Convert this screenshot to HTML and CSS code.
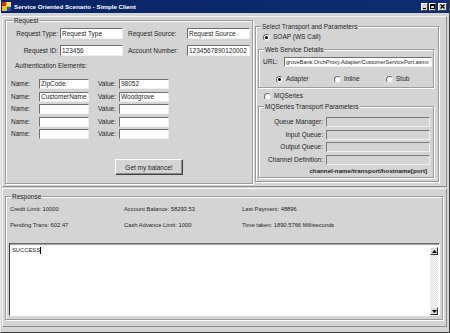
FILE: index.html
```html
<!DOCTYPE html>
<html lang="en">
<head>
  <meta charset="UTF-8">
  <title>Service Oriented Scenario - Simple Client</title>
  <link rel="stylesheet" href="styles.css">
</head>
<body>

  <div class="window">
    <div class="titlebar">
      <svg class="app-icon" width="9" height="9" viewBox="0 0 9 9">
        <rect x="0" y="0" width="9" height="9" fill="#f0c020"/>
        <rect x="0" y="0" width="4" height="4" fill="#d03020"/>
        <rect x="5" y="5" width="4" height="4" fill="#2050c0"/>
        <rect x="5" y="0" width="4" height="4" fill="#f8e070"/>
      </svg>
      <span class="title">Service Oriented Scenario - Simple Client</span>
      <div class="caption-buttons">
        <span class="cap-btn cap-min"></span>
        <span class="cap-btn cap-max"></span>
        <span class="cap-btn cap-close">
          <svg width="5" height="5" viewBox="0 0 5 5"><path d="M0.5 0.5 L4.5 4.5 M4.5 0.5 L0.5 4.5" stroke="#000" stroke-width="1.2"/></svg>
        </span>
      </div>
    </div>

    <div class="panel panel-top">
      <fieldset class="group request">
        <legend>Request</legend>
        <div class="req-grid">
          <span class="lbl right">Request Type:</span>
          <div class="field">Request Type</div>
          <span class="lbl lbl2">Request Source:</span>
          <div class="field">Request Source</div>
          <span class="lbl right">Request ID:</span>
          <div class="field">123456</div>
          <span class="lbl lbl2">Account Number:</span>
          <div class="field">1234567890120002</div>
        </div>

        <div class="auth-title">Authentication Elements:</div>
        <div class="auth-grid">
          <span class="lbl name">Name:</span><div class="field">ZipCode</div>
          <span class="lbl value">Value:</span><div class="field">98052</div>
          <span class="lbl name">Name:</span><div class="field">CustomerName</div>
          <span class="lbl value">Value:</span><div class="field">Woodgrove</div>
          <span class="lbl name">Name:</span><div class="field"></div>
          <span class="lbl value">Value:</span><div class="field"></div>
          <span class="lbl name">Name:</span><div class="field"></div>
          <span class="lbl value">Value:</span><div class="field"></div>
          <span class="lbl name">Name:</span><div class="field"></div>
          <span class="lbl value">Value:</span><div class="field"></div>
        </div>

        <button class="btn">Get my balance!</button>
      </fieldset>

      <fieldset class="group transport">
        <legend>Select Transport and Parameters</legend>
        <div class="radio-row soap-row"><span class="radio on"></span>SOAP (WS Call)</div>

        <fieldset class="group ws-group">
          <legend>Web Service Details</legend>
          <div class="url-row">
            <span class="lbl url-lbl">URL:</span>
            <div class="field url-field">groveBank.OrchProxy.Adapter/CustomerServicePort.asmx</div>
          </div>
          <div class="mode-row">
            <div class="radio-row mode-adapter"><span class="radio on"></span>Adapter</div>
            <div class="radio-row mode-inline"><span class="radio"></span>Inline</div>
            <div class="radio-row"><span class="radio"></span>Stub</div>
          </div>
        </fieldset>

        <div class="radio-row mq-row"><span class="radio"></span>MQSeries</div>

        <fieldset class="group mq-group">
          <legend>MQSeries Transport Parameters</legend>
          <div class="mq-grid">
            <span class="lbl right">Queue Manager:</span><div class="field off"></div>
            <span class="lbl right">Input Queue:</span><div class="field off"></div>
            <span class="lbl right">Output Queue:</span><div class="field off"></div>
            <span class="lbl right">Channel Definition:</span><div class="field off"></div>
          </div>
          <div class="mq-note">channel-name/transport/hostname[port]</div>
        </fieldset>
      </fieldset>
    </div>

    <div class="panel panel-bottom">
      <fieldset class="group response">
        <legend>Response</legend>
        <div class="info-grid">
          <span>Credit Limit: 10000</span>
          <span>Account Balance: 58293.53</span>
          <span>Last Payment: 48896</span>
          <span>Pending Trans: 602.47</span>
          <span>Cash Advance Limit: 1000</span>
          <span>Time taken: 1890.5766 Milliseconds</span>
        </div>
        <div class="textbox">
          <div class="text-body">SUCCESS<span class="caret"></span></div>
          <div class="scrollbar">
            <span class="sb-btn">
              <svg width="5" height="3" viewBox="0 0 5 3"><path d="M0 3 L2.5 0 L5 3 Z" fill="#000"/></svg>
            </span>
            <span class="sb-track"></span>
            <span class="sb-btn">
              <svg width="5" height="3" viewBox="0 0 5 3"><path d="M0 0 L2.5 3 L5 0 Z" fill="#000"/></svg>
            </span>
          </div>
        </div>
      </fieldset>
    </div>
  </div>

</body>
</html>
```

FILE: styles.css
```css
body {
  margin: 0;
  background: #d4d4d4;
  font-family: "Liberation Sans", Arial, sans-serif;
  font-size: 6.5px;
  color: #1e1e1e;
}

.window {
  width: 450px;
  height: 333px;
  box-sizing: border-box;
  border-left: 1px solid #e8e8e8;
  border-right: 1px solid #404040;
  border-bottom: 1px solid #404040;
  background: #d4d4d4;
  overflow: hidden;
}

/* title bar */
.titlebar {
  height: 13px;
  display: flex;
  align-items: center;
  padding: 0 2px 0 1px;
  background: linear-gradient(90deg, #0a2466, #0e2c72);
}

.app-icon {
  margin-right: 3px;
}

.title {
  flex: 1;
  color: #fff;
  font-weight: bold;
  font-size: 6.2px;
  line-height: 8px;
}

.caption-buttons {
  display: flex;
  gap: 1px;
}

.cap-btn {
  width: 7px;
  height: 8px;
  box-sizing: border-box;
  background: #d4d4d4;
  border: 1px solid;
  border-color: #fff #404040 #404040 #fff;
  position: relative;
  display: flex;
  align-items: center;
  justify-content: center;
}

.cap-min::after {
  content: "";
  position: absolute;
  left: 1px;
  bottom: 1px;
  width: 3px;
  height: 1px;
  background: #000;
}

.cap-max::after {
  content: "";
  width: 3px;
  height: 2px;
  border: 1px solid #000;
  border-top-width: 2px;
}

.cap-close {
  width: 9px;
  margin-left: 1px;
}

/* split panels */
.panel {
  box-sizing: border-box;
  border: 1px solid;
  border-color: #f4f4f4 #8c8c8c #8c8c8c #f4f4f4;
  margin-left: 1px;
  margin-right: 2px;
}

.panel-top {
  margin-top: 3px;
  height: 171px;
  display: flex;
  align-items: flex-start;
}

.panel-bottom {
  margin-top: 1px;
  height: 139px;
}

/* group boxes */
.group {
  margin: 0;
  padding: 0;
  min-width: 0;
  box-sizing: border-box;
  border: 1px solid #9a9a9a;
  box-shadow: inset 1px 1px 0 #fff, 1px 1px 0 #fff;
}

.group legend {
  font-size: 6.5px;
  line-height: 7px;
  padding: 0 1px;
  margin-left: 5px;
  background: #d4d4d4;
}

.lbl {
  line-height: 10px;
  white-space: nowrap;
}

.right {
  text-align: right;
}

.field {
  box-sizing: border-box;
  height: 10px;
  background: #fff;
  border: 1px solid;
  border-color: #6e6e6e #f0f0f0 #f0f0f0 #6e6e6e;
  padding: 0 1px;
  line-height: 8px;
  white-space: nowrap;
  overflow: hidden;
}

.field.off {
  background: #d4d4d4;
  border-color: #7a7a7a #f0f0f0 #f0f0f0 #7a7a7a;
}

/* request */
.request {
  width: 248px;
  height: 167px;
  margin-left: 2px;
  padding: 4px 0 0 2px;
}

.req-grid {
  display: grid;
  grid-template-columns: 50px 63px 60px 63px;
  grid-auto-rows: 11px;
  column-gap: 2px;
  row-gap: 6px;
}

.req-grid .field {
  height: 11px;
  line-height: 9px;
}

.req-grid .lbl {
  line-height: 11px;
}

.lbl2 {
  padding-left: 3px;
}

.auth-title {
  margin: 6px 0 0 7px;
  line-height: 7px;
}

.auth-grid {
  margin-top: 10px;
  display: grid;
  grid-template-columns: 29px 50px 26px 50px;
  grid-auto-rows: 10px;
  column-gap: 2px;
  row-gap: 2.5px;
}

.auth-grid .name {
  padding-left: 3px;
}

.auth-grid .value {
  padding-left: 7px;
}

.btn {
  display: block;
  margin: 20px 0 0 107px;
  width: 68px;
  height: 16px;
  padding: 0;
  font-family: inherit;
  font-size: 6.5px;
  color: #1e1e1e;
  background: #d4d4d4;
  border: 1px solid;
  border-color: #fff #404040 #404040 #fff;
  box-shadow: inset -1px -1px 0 #8c8c8c;
}

/* transport */
.transport {
  width: 184px;
  height: 159px;
  margin: 6px 0 0 2px;
  padding: 3px 0 0 0;
}

.radio-row {
  display: flex;
  align-items: center;
  height: 8px;
  line-height: 8px;
  white-space: nowrap;
}

.radio {
  width: 7px;
  height: 7px;
  box-sizing: border-box;
  border-radius: 50%;
  border: 1px solid;
  border-color: #6a6a6a #e0e0e0 #e0e0e0 #6a6a6a;
  background: #fff;
  margin-right: 3px;
  display: flex;
  align-items: center;
  justify-content: center;
}

.radio.on::after {
  content: "";
  width: 3px;
  height: 3px;
  border-radius: 50%;
  background: #000;
}

.soap-row {
  padding-left: 7px;
}

.ws-group {
  width: 176px;
  height: 42px;
  margin: 5px 0 0 2px;
  padding: 4px 0 0 0;
}

.url-row {
  display: flex;
  padding-left: 4px;
}

.url-lbl {
  width: 21px;
}

.url-field {
  width: 148px;
  font-size: 5.5px;
}

.mode-row {
  display: flex;
  margin-top: 8px;
  padding-left: 17px;
}

.mode-adapter {
  width: 58px;
}

.mode-inline {
  width: 52px;
}

.mq-row {
  margin-top: 4px;
  padding-left: 8px;
}

.mq-group {
  width: 176px;
  height: 75px;
  margin: 3px 0 0 2px;
  padding: 7px 0 0 0;
}

.mq-grid {
  display: grid;
  grid-template-columns: 64px 104px;
  grid-auto-rows: 10px;
  column-gap: 3px;
  row-gap: 2.7px;
}

.mq-note {
  margin-top: 2px;
  padding-right: 6px;
  text-align: right;
  font-weight: bold;
  font-size: 6.2px;
  line-height: 8px;
}

/* response */
.response {
  width: 438px;
  height: 127px;
  margin: 4px 0 0 2px;
  padding: 5px 0 0 0;
  font-size: 5.8px;
}

.info-grid {
  display: grid;
  grid-template-columns: 114px 118px auto;
  grid-auto-rows: 8px;
  row-gap: 8px;
  padding-left: 4px;
  line-height: 8px;
  white-space: nowrap;
}

.textbox {
  display: flex;
  width: 431px;
  height: 73px;
  margin: 14px 0 0 3px;
  box-sizing: border-box;
  background: #fff;
  border: 1px solid;
  border-color: #6a6a6a #fafafa #fafafa #303030;
  box-shadow: inset 0 1px 0 #a0a0a0;
}

.text-body {
  flex: 1;
  padding: 3px 2px;
  line-height: 7px;
}

.caret {
  display: inline-block;
  width: 1px;
  height: 7px;
  background: #000;
  vertical-align: top;
}

.scrollbar {
  width: 8px;
  margin: 3px 1px 0 0;
  display: flex;
  flex-direction: column;
}

.sb-btn {
  height: 8px;
  box-sizing: border-box;
  background: #d8d8d8;
  border: 1px solid;
  border-color: #f4f4f4 #303030 #303030 #f4f4f4;
  display: flex;
  align-items: center;
  justify-content: center;
}

.sb-track {
  flex: 1;
  background: repeating-conic-gradient(#e4e4e4 0 25%, #f4f4f4 0 50%) 0 0 / 2px 2px;
}
```
